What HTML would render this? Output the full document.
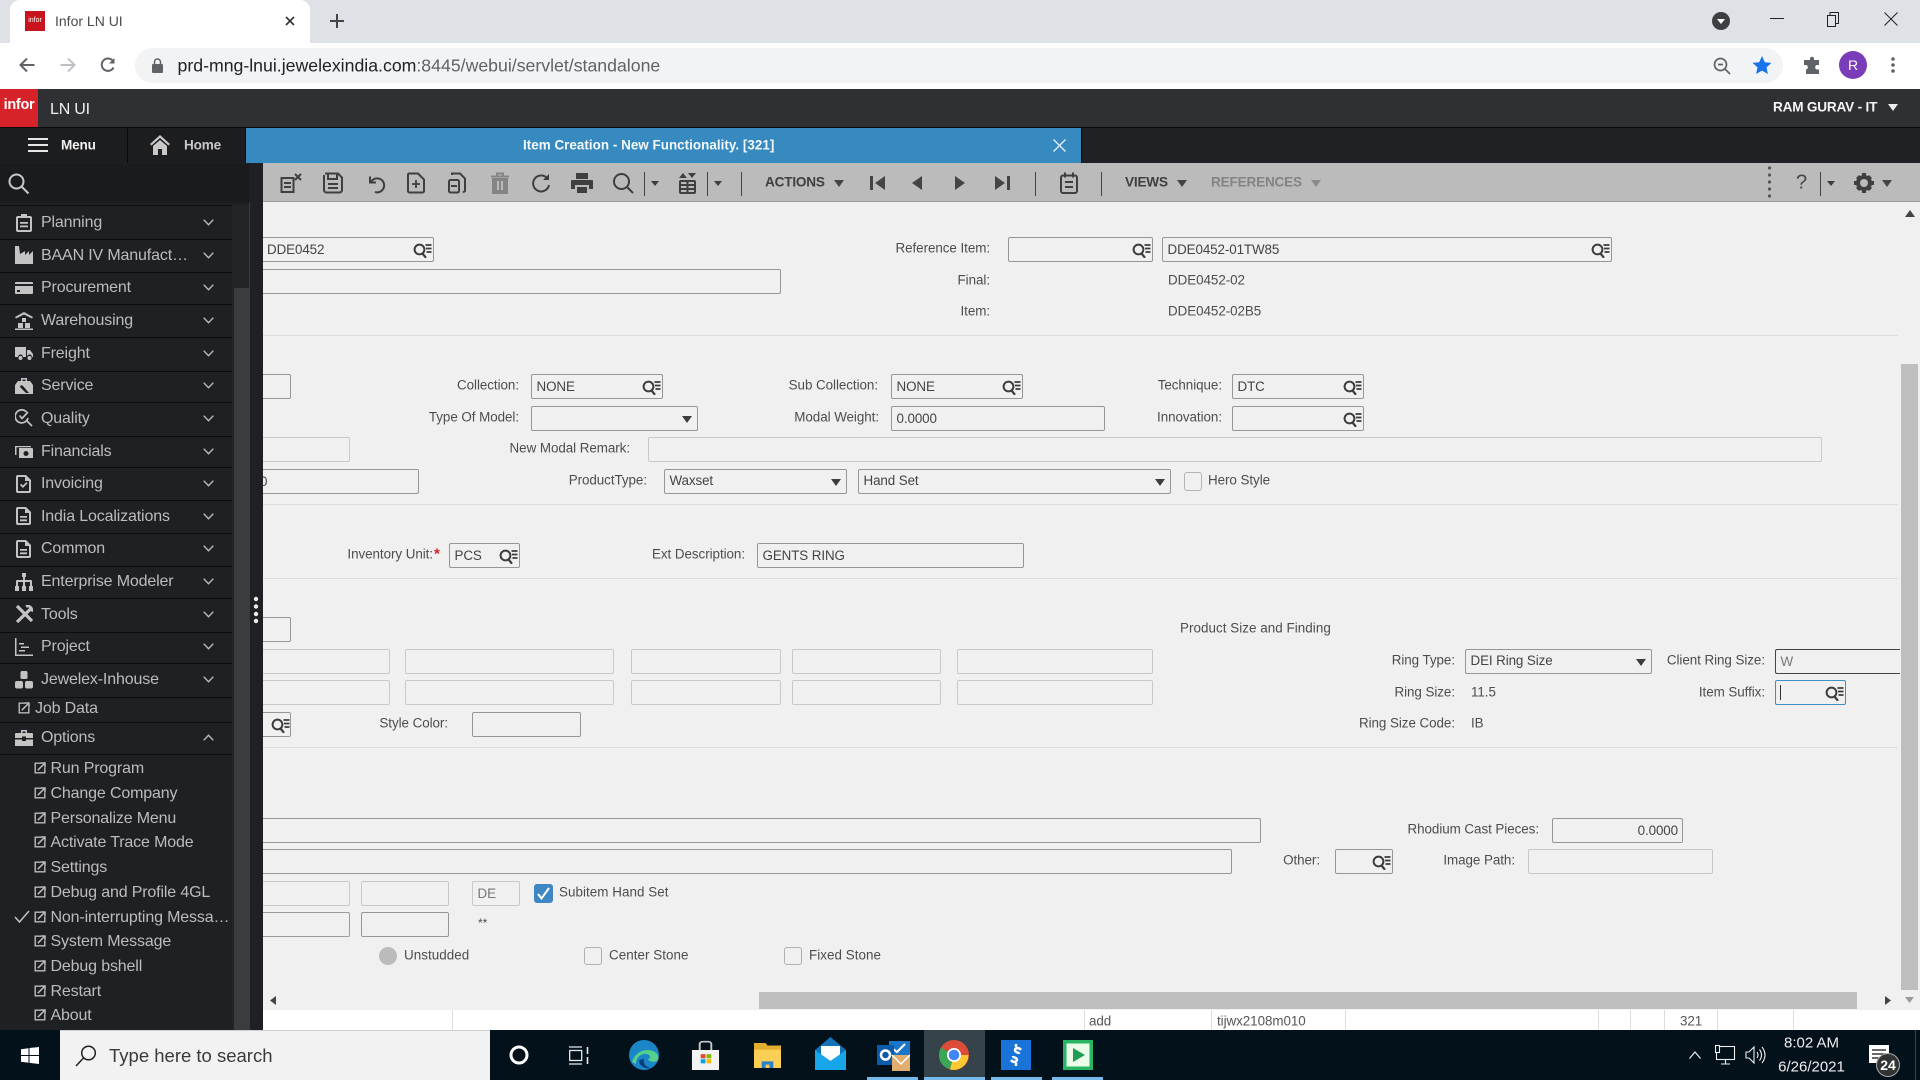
<!DOCTYPE html>
<html><head><meta charset="utf-8"><title>Infor LN UI</title>
<style>
html,body{margin:0;padding:0;width:1920px;height:1080px;overflow:hidden;background:#f0f0f0;font-family:"Liberation Sans",Arial,sans-serif}
div,svg{position:absolute}
.t,.l{position:absolute;white-space:nowrap;font-size:13.4px;color:#4d4d4d;transform:translateY(-50%);letter-spacing:-.05px}
.l{transform:translate(-100%,-50%)}
.i{box-sizing:border-box;border:1px solid #969696;border-radius:2px;background:#f0f0f0;font-size:13.4px;color:#444;padding-left:4.5px;overflow:hidden;white-space:nowrap;line-height:23px;letter-spacing:-.1px}
.d{border-color:#c9c9c9}
.p{border-left:none;border-radius:0 2px 2px 0;padding-left:4px}
.sl{line-height:21px}
.q{right:1px;top:5px;width:19px;height:15px}
.a{width:0;height:0;border-left:5px solid transparent;border-right:5px solid transparent;border-top:7px solid #3d3d3d}
.hr{left:263px;width:1635px;height:1px;background:#dcdcdc}
.m{font-size:16px;color:#bcbcbc;left:41px;letter-spacing:-.15px;margin-top:1px}
.s{font-size:16px;color:#bcbcbc;left:50.5px;letter-spacing:-.15px;margin-top:1px}
.sep{position:absolute;left:0;width:232px;height:1px;background:#0d0d0e}
.tb{top:172px;width:22px;height:22px;fill:none;stroke:#3f3f3f;stroke-width:2}
.vs{top:172px;width:1px;height:24px;background:#444}
.sb{top:1010px;width:1px;height:20px;background:#dcdcdc}
.bt{font-weight:bold;font-size:13.6px;letter-spacing:-.2px}
.ul{top:1077px;height:3px;background:#76b9ed}
.ic{left:15px;width:18px;height:18px;fill:#c4c4c4;stroke:none}
.ch{left:203px;width:11px;height:7px;fill:none;stroke:#bcbcbc;stroke-width:1.4}
.e{width:12px;height:12px;fill:none;stroke:#bcbcbc;stroke-width:1.4}
</style></head><body>
<svg width="0" height="0" style="left:0;top:0">
<defs>
<symbol id="lk" viewBox="0 0 19 15"><circle cx="6.5" cy="6.5" r="4.9" fill="none" stroke="#3c3c3c" stroke-width="2"/><path d="M9.5 10.5L13 14.8" stroke="#3c3c3c" stroke-width="2.2" fill="none"/><path d="M12.5 2h6M13 5.5h5.5M13.5 9h5" stroke="#3c3c3c" stroke-width="1.7" fill="none"/></symbol>
<symbol id="ex" viewBox="0 0 12 12"><path d="M7 1.2H1.2v9.6h9.6V5.5"/><path d="M3.8 8.2L10.6 1.4M6.8 1h4.2v4.2" stroke-width="1.5"/></symbol>
<symbol id="cv" viewBox="0 0 11 7"><path d="M.7.7l4.8 5 4.8-5"/></symbol>
<symbol id="cu" viewBox="0 0 11 7"><path d="M.7 6.3l4.8-5 4.8 5"/></symbol>
<symbol id="doc" viewBox="0 0 18 18"><path d="M3 0h8l5 5v11a2 2 0 0 1-2 2H3a2 2 0 0 1-2-2V2a2 2 0 0 1 2-2zm0 2v14h11V6h-4V2zM5 9h7v1.8H5zm0 3.4h7v1.8H5z" fill-rule="evenodd"/></symbol>
</defs></svg>

<!-- Chrome tab bar -->
<div style="left:0;top:0;width:1920px;height:43px;background:#dee1e6"></div>
<div style="left:10px;top:0;width:300px;height:43px;background:#fff;border-radius:10px 10px 0 0"></div>
<div style="left:25px;top:11px;width:20px;height:20px;background:#c8141c;color:#fff;font-size:7px;line-height:20px;text-align:center">infor</div>
<span class="t" style="left:55px;top:21px;font-size:14px;color:#4a4a4a;letter-spacing:0">Infor LN UI</span>
<svg style="left:285px;top:16px" width="10" height="10"><path d="M1 1l8 8M9 1l-8 8" stroke="#333" stroke-width="1.6"/></svg>
<svg style="left:330px;top:14px" width="14" height="14"><path d="M7 0v14M0 7h14" stroke="#444" stroke-width="2"/></svg>
<svg style="left:1712px;top:12px" width="18" height="18"><circle cx="9" cy="9" r="9" fill="#3c4043"/><path d="M5 7h8l-4 5z" fill="#fff"/></svg>
<div style="left:1770px;top:18px;width:14px;height:1px;background:#222"></div>
<svg style="left:1826px;top:12px" width="13" height="15" fill="none" stroke="#222"><rect x="1.5" y="3.5" width="8" height="11"/><path d="M4 3V.5h8.500v11H10"/></svg>
<svg style="left:1884px;top:12px" width="14" height="14"><path d="M.5.5l13 13M13.500.5l-13 13" stroke="#222" stroke-width="1"/></svg>

<!-- Chrome toolbar -->
<div style="left:0;top:43px;width:1920px;height:46px;background:#fff"></div>
<div style="left:135px;top:48px;width:1648px;height:35px;background:#f1f3f4;border-radius:18px"></div>
<svg style="left:19px;top:57px" width="16" height="16" fill="none" stroke="#5f6368" stroke-width="2"><path d="M15.500 8H2M8 1.500L1.500 8 8 14.500"/></svg>
<svg style="left:60px;top:57px" width="16" height="16" fill="none" stroke="#bdc1c6" stroke-width="2"><path d="M.5 8H14M8 1.500L14.500 8 8 14.500"/></svg>
<svg style="left:100px;top:57px" width="16" height="16" fill="none" stroke="#5f6368" stroke-width="2"><path d="M13.500 10.500A6.200 6.200 0 1 1 12.500 3.500"/><path d="M14.500 1v5.500H9" fill="#5f6368" stroke="none"/></svg>
<svg style="left:152px;top:58px" width="11" height="15"><rect x="0" y="6" width="11" height="9" rx="1" fill="#5f6368"/><path d="M2.500 6.500V4a3 3 0 0 1 6 0v2.500" fill="none" stroke="#5f6368" stroke-width="1.500"/></svg>
<span class="t" style="left:177.500px;top:66px;font-size:17.7px;color:#202124;letter-spacing:0">prd-mng-lnui.jewelexindia.com<span style="color:#5f6368">:8445/webui/servlet/standalone</span></span>
<svg style="left:1713px;top:57px" width="18" height="18" fill="none" stroke="#5f6368" stroke-width="1.700"><circle cx="7.500" cy="7.500" r="6"/><path d="M12 12l5 5M5 7.500h5"/></svg>
<svg style="left:1752px;top:55px" width="20" height="20"><path d="M10 1l2.800 6.200 6.700.7-5 4.500 1.400 6.600L10 15.600 4.100 19l1.400-6.600-5-4.500 6.700-.7z" fill="#1a73e8"/></svg>
<svg style="left:1803px;top:56px" width="19" height="19"><path d="M7 2a2.200 2.200 0 0 1 4 0v2h5v5h-2a2.300 2.300 0 0 0 0 4.500h2V18H3v-4.500a2.300 2.300 0 0 0 0-4.500H1V4h6z" fill="#5f6368"/></svg>
<div style="left:1839px;top:51px;width:28px;height:28px;border-radius:50%;background:#7a3db8;color:#fff;font-size:14px;line-height:28px;text-align:center">R</div>
<svg style="left:1891px;top:57px" width="4" height="16"><circle cx="2" cy="2" r="1.800" fill="#5f6368"/><circle cx="2" cy="8" r="1.800" fill="#5f6368"/><circle cx="2" cy="14" r="1.800" fill="#5f6368"/></svg>

<!-- App header -->
<div style="left:0;top:89px;width:1920px;height:38px;background:#2f3034"></div>
<div style="left:0;top:89px;width:38px;height:38px;background:#d8222a;color:#fff;font-weight:bold;font-size:14.500px;line-height:33px;text-align:center;letter-spacing:-.3px">infor</div>
<span class="t" style="left:50px;top:110px;font-size:16px;color:#f0f0f0;letter-spacing:-.2px">LN UI</span>
<span class="t bt" style="left:1773px;top:107px;color:#f5f5f5">RAM GURAV - IT</span>
<div class="a" style="left:1888px;top:104px;border-top-color:#eee"></div>
<div style="left:0;top:127px;width:1920px;height:1px;background:#0a0a0a"></div>

<!-- Tab row -->
<div style="left:0;top:128px;width:1920px;height:35px;background:#202124"></div>
<div style="left:0;top:128px;width:246px;height:35px;background:#1c1d1f"></div>
<div style="left:127px;top:128px;width:1px;height:35px;background:#0a0a0a"></div>
<div style="left:245px;top:128px;width:1px;height:35px;background:#0a0a0a"></div>
<svg style="left:28px;top:137px" width="20" height="16"><path d="M0 2h20M0 8h20M0 14h20" stroke="#e6e6e6" stroke-width="2"/></svg>
<span class="t bt" style="left:61px;top:145px;color:#f0f0f0">Menu</span>
<svg style="left:150px;top:135px" width="20" height="20"><path d="M10 0L20 9l-1.500 1.500L10 3 1.500 10.500 0 9z M10 5l7 6v9h-5v-6H8v6H3v-9z" fill="#c8c8c8"/></svg>
<span class="t bt" style="left:184px;top:145px;color:#c8c8c8">Home</span>
<div style="left:246px;top:128px;width:835px;height:35px;background:#368ac0"></div>
<span class="t bt" style="left:523px;top:145px;color:#f4f8fb;font-size:13.400px;letter-spacing:.04px">Item Creation - New Functionality. [321]</span>
<svg style="left:1053px;top:139px" width="13" height="13"><path d="M.5.5l12 12M12.500.5l-12 12" stroke="#e4f0f8" stroke-width="1.300"/></svg>
<div style="left:1081px;top:128px;width:1px;height:35px;background:#0a0a0a"></div>

<!-- Main form bg -->
<div style="left:263px;top:201px;width:1657px;height:829px;background:#f0f0f0"></div>

<!-- Toolbar -->
<div style="left:263px;top:163px;width:1657px;height:39px;background:#bbbbbb;border-bottom:1px solid #9c9c9c;box-sizing:border-box"></div>
<svg class="tb" style="left:280px" viewBox="0 0 22 22"><rect x="1.500" y="6" width="12" height="14"/><path d="M4 11h7M4 15h7"/><path d="M15 2l6 6M21 2l-6 6" stroke-width="2"/></svg>
<svg class="tb" style="left:322px" viewBox="0 0 22 22"><path d="M3 1.500h13l4 4V18a2.500 2.500 0 0 1-2.500 2.500h-13A2.500 2.500 0 0 1 2 18V3"/><path d="M6 2v5h9V2M6 12h10M6 16h10"/></svg>
<svg class="tb" style="left:364px" viewBox="0 0 22 22"><path d="M6 4.500v6h6"/><path d="M7 10a7 7 0 1 1 4 10"/></svg>
<svg class="tb" style="left:405px" viewBox="0 0 22 22"><path d="M4 1.500h9l6 6V19a1.500 1.500 0 0 1-1.500 1.500h-13A1.500 1.500 0 0 1 3 19V3a1.500 1.500 0 0 1 1-1.500z"/><path d="M11 8v8M7 12h8" stroke-width="1.800"/></svg>
<svg class="tb" style="left:446px" viewBox="0 0 22 22"><path d="M6 3V1.500h8l5 5V19l-2 1.500"/><rect x="3" y="8" width="10" height="12.500" rx="1.500"/><path d="M5 14h6"/></svg>
<svg class="tb" style="left:489px;stroke:#858585" viewBox="0 0 22 22"><path d="M2 4.500h18M8 4V1.500h6V4"/><path d="M4 7h14v14H4z" fill="#858585"/><path d="M9 9v9M13 9v9" stroke="#bbb"/></svg>
<svg class="tb" style="left:530px" viewBox="0 0 22 22"><path d="M17 6a8 8 0 1 0 2 7"/><path d="M19 2v6h-6" fill="#3f3f3f" stroke="none"/></svg>
<svg class="tb" style="left:571px;stroke:none;fill:#3f3f3f" viewBox="0 0 22 22"><path d="M5 1h12v6H5zM1 8h20a1 1 0 0 1 1 1v8h-4v-4H4v4H0V9a1 1 0 0 1 1-1zM6 15h10v6H6z"/></svg>
<svg class="tb" style="left:612px" viewBox="0 0 22 22"><circle cx="9.500" cy="9.500" r="7.500"/><path d="M15 15l6 6"/></svg>
<div class="vs" style="left:644px"></div>
<div class="a" style="left:651px;top:181px;border-left-width:4px;border-right-width:4px;border-top-width:5px"></div>
<svg class="tb" style="left:677px" viewBox="0 0 22 22"><rect x="3" y="9" width="15" height="12" rx="1"/><path d="M3 13h15M3 17h15M10.500 9v12"/><path d="M6 1l4 5H2zM15 6l4-5h-8z" fill="#3f3f3f" stroke="none"/></svg>
<div class="vs" style="left:707px"></div>
<div class="a" style="left:714px;top:181px;border-left-width:4px;border-right-width:4px;border-top-width:5px"></div>
<div class="vs" style="left:741px"></div>
<span class="t bt" style="left:765px;top:182px;color:#3f3f3f">ACTIONS</span>
<div class="a" style="left:834px;top:180px;border-top-color:#444"></div>
<svg style="left:870px;top:176px" width="15" height="14"><path d="M0 0h3v14H0zM15 0v14L5 7z" fill="#444"/></svg>
<svg style="left:912px;top:176px" width="10" height="14"><path d="M10 0v14L0 7z" fill="#444"/></svg>
<svg style="left:955px;top:176px" width="10" height="14"><path d="M0 0v14l10-7z" fill="#444"/></svg>
<svg style="left:995px;top:176px" width="15" height="14"><path d="M0 0v14l10-7zM12 0h3v14h-3z" fill="#444"/></svg>
<div class="vs" style="left:1035px"></div>
<svg class="tb" style="left:1058px" viewBox="0 0 22 22"><rect x="3" y="3.500" width="16" height="17.500" rx="2"/><path d="M7 .5v5M15 .5v5M7 10h8M7 15h8"/></svg>
<div class="vs" style="left:1101px"></div>
<span class="t bt" style="left:1125px;top:182px;color:#3f3f3f">VIEWS</span>
<div class="a" style="left:1177px;top:180px;border-top-color:#444"></div>
<span class="t bt" style="left:1211px;top:182px;color:#838383">REFERENCES</span>
<div class="a" style="left:1311px;top:180px;border-top-color:#8a8a8a"></div>
<svg style="left:1767px;top:165px" width="5" height="34"><circle cx="2.500" cy="3" r="1.600" fill="#555"/><circle cx="2.500" cy="10" r="1.600" fill="#555"/><circle cx="2.500" cy="17" r="1.600" fill="#555"/><circle cx="2.500" cy="24" r="1.600" fill="#555"/><circle cx="2.500" cy="31" r="1.600" fill="#555"/></svg>
<span class="t" style="left:1796px;top:183px;font-size:20px;color:#444;letter-spacing:0">?</span>
<div class="vs" style="left:1820px"></div>
<div class="a" style="left:1827px;top:181px;border-left-width:4px;border-right-width:4px;border-top-width:5px"></div>
<svg style="left:1853px;top:172px" width="22" height="22" viewBox="0 0 22 22"><circle cx="11" cy="11" r="6" fill="none" stroke="#3f3f3f" stroke-width="4"/><path d="M9 1h4v4H9zM9 17h4v4H9zM1 9h4v4H1zM17 9h4v4h-4zM3 6l3-3 3 3-3 3zM13 16l3-3 3 3-3 3zM16 3l3 3-3 3-3-3zM6 13l3 3-3 3-3-3z" fill="#3f3f3f"/></svg>
<div class="a" style="left:1882px;top:180px;border-top-color:#444"></div>

<!-- Sidebar -->
<div style="left:0;top:163px;width:263px;height:867px;background:#1f2023"></div>
<div style="left:0;top:164px;width:249px;height:39px;background:#1a1b1d"></div>
<svg style="left:8px;top:173px" width="22" height="22" fill="none" stroke="#c8c8c8" stroke-width="2"><circle cx="8.500" cy="8.500" r="7"/><path d="M13.500 13.500l7 7"/></svg>
<div style="left:232px;top:205px;width:17px;height:825px;background:#232427"></div>
<div style="left:234px;top:288px;width:15px;height:742px;background:#3b3c3f"></div>
<div style="left:249px;top:203px;width:1px;height:827px;background:#3a3b3e"></div>
<svg style="left:253px;top:596px" width="6" height="28"><circle cx="3" cy="3" r="2.200" fill="#eee"/><circle cx="3" cy="10.500" r="2.200" fill="#eee"/><circle cx="3" cy="18" r="2.200" fill="#eee"/><circle cx="3" cy="25" r="2.200" fill="#eee"/></svg>
<div class="sep" style="top:205px"></div><div class="sep" style="top:239px"></div><div class="sep" style="top:272px"></div><div class="sep" style="top:304px"></div><div class="sep" style="top:337px"></div><div class="sep" style="top:371px"></div><div class="sep" style="top:402px"></div><div class="sep" style="top:436px"></div><div class="sep" style="top:467px"></div><div class="sep" style="top:500px"></div><div class="sep" style="top:533px"></div><div class="sep" style="top:566px"></div><div class="sep" style="top:598px"></div><div class="sep" style="top:632px"></div><div class="sep" style="top:663px"></div><div class="sep" style="top:697px"></div><div class="sep" style="top:722px"></div><div class="sep" style="top:754px"></div>

<svg class="ic" style="top:214px" viewBox="0 0 18 18"><path d="M6 0h6v2h3a2 2 0 0 1 2 2v12a2 2 0 0 1-2 2H3a2 2 0 0 1-2-2V4a2 2 0 0 1 2-2h3zM3 4v12h12V4zM5 8h8v1.800H5zm0 3.500h8v1.800H5z" fill-rule="evenodd"/></svg>
<span class="t m" style="top:222px">Planning</span>
<svg class="ic" style="top:246px" viewBox="0 0 18 18"><path d="M0 0h4l1 8 5-3v4l4-4v4l4-4v13H0z"/></svg>
<span class="t m" style="top:255px">BAAN IV Manufact…</span>
<svg class="ic" style="top:279px" viewBox="0 0 18 18"><path d="M1 3h16a1 1 0 0 1 1 1v1H0V4a1 1 0 0 1 1-1zM0 7h18v7a1 1 0 0 1-1 1H1a1 1 0 0 1-1-1zm2 4v2h3v-2z" fill-rule="evenodd"/></svg>
<span class="t m" style="top:287px">Procurement</span>
<svg class="ic" style="top:312px" viewBox="0 0 18 18"><path d="M9 0l9 5-1 1.500L9 2.500 1 6.500 0 5zM7 6h4v4H7zM3 11h5v5H3zM10 11h5v5h-5zM0 16.500h18V18H0z"/></svg>
<span class="t m" style="top:320px">Warehousing</span>
<svg class="ic" style="top:344px" viewBox="0 0 18 18"><path d="M0 3h11v10H8a2.500 2.500 0 0 0-5 0H0zM12 6h3l3 4v3h-1a2.500 2.500 0 0 0-5 0z"/><circle cx="5.500" cy="14" r="2"/><circle cx="14.500" cy="14" r="2"/></svg>
<span class="t m" style="top:353px">Freight</span>
<svg class="ic" style="top:377px" viewBox="0 0 18 18"><path d="M6 1h6v3h3l3 4v9H0V8l3-4h3zm1.500 1.500V4h3V2.500zM6 8l-1 2 6 6h3l-6-7z" fill-rule="evenodd"/></svg>
<span class="t m" style="top:385px">Service</span>
<svg class="ic" style="top:409px;fill:none;stroke:#c4c4c4;stroke-width:1.700" viewBox="0 0 18 18"><path d="M11.500 3A6.500 6.500 0 1 0 13 9"/><path d="M4.500 6.500l2.500 3 6-6.500M11 11l6 6"/></svg>
<span class="t m" style="top:418px">Quality</span>
<svg class="ic" style="top:442px" viewBox="0 0 18 18"><path d="M4 6h13a1 1 0 0 1 1 1v9H4zm7 3a2.500 2.500 0 1 0 .01 0zM0 4h16v1.200H1.500V13H0z" fill-rule="evenodd"/></svg>
<span class="t m" style="top:451px">Financials</span>
<svg class="ic" style="top:475px" viewBox="0 0 18 18"><path d="M3 0h8l5 5v11a2 2 0 0 1-2 2H3a2 2 0 0 1-2-2V2a2 2 0 0 1 2-2zm0 2v14h11V6h-4V2zM5 10l1.200-1.200 1.700 1.700 3.500-3.500L12.600 8.200l-4.700 4.800z" fill-rule="evenodd"/></svg>
<span class="t m" style="top:483px">Invoicing</span>
<svg class="ic" style="top:507px"><use href="#doc"/></svg>
<span class="t m" style="top:516px">India Localizations</span>
<svg class="ic" style="top:540px"><use href="#doc"/></svg>
<span class="t m" style="top:548px">Common</span>
<svg class="ic" style="top:573px" viewBox="0 0 18 18"><path d="M7 0h4v4h-1v3h6a1 1 0 0 1 1 1v5h1v5h-4v-5h1V9h-5v4h1v5H7v-5h1V9H3v4h1v5H0v-5h1V8a1 1 0 0 1 1-1h6V4H7z"/></svg>
<span class="t m" style="top:581px">Enterprise Modeler</span>
<svg class="ic" style="top:605px;fill:none;stroke:#c4c4c4;stroke-width:3.200" viewBox="0 0 18 18"><path d="M2 1l15 15"/><path d="M15.500 4L2 17"/><path d="M11 1.500a4 4 0 0 1 5.500 5" stroke-width="2.600"/></svg>
<span class="t m" style="top:614px">Tools</span>
<svg class="ic" style="top:638px" viewBox="0 0 18 18"><path d="M0 0h1.500v16.500H18V18H0zM4 5h5v1.500H4zM6 8.500h8V10H6zM4 12h6v1.500H4z"/></svg>
<span class="t m" style="top:646px">Project</span>
<svg class="ic" style="top:671px" viewBox="0 0 18 18"><rect x="5.500" y="0" width="7" height="8" rx="1.500"/><rect x="0" y="10" width="8" height="7.500" rx="2"/><rect x="10" y="10" width="8" height="7.500" rx="2"/></svg>
<span class="t m" style="top:679px">Jewelex-Inhouse</span>
<svg class="e" style="left:18px;top:702px"><use href="#ex"/></svg>
<span class="t m" style="top:708px;left:35px">Job Data</span>
<svg class="ic" style="top:729px" viewBox="0 0 18 18"><path d="M6 1h6v3h5a1 1 0 0 1 1 1v4H11V7.500H7V9H0V5a1 1 0 0 1 1-1h5zm1.500 1.500V4h3V2.500zM0 10.500h7V12h4v-1.500h7V17H0z" fill-rule="evenodd"/></svg>
<span class="t m" style="top:737px">Options</span>
<svg class="ch" style="top:219px"><use href="#cv"/></svg><svg class="ch" style="top:252px"><use href="#cv"/></svg><svg class="ch" style="top:284px"><use href="#cv"/></svg><svg class="ch" style="top:317px"><use href="#cv"/></svg><svg class="ch" style="top:350px"><use href="#cv"/></svg><svg class="ch" style="top:382px"><use href="#cv"/></svg><svg class="ch" style="top:415px"><use href="#cv"/></svg><svg class="ch" style="top:448px"><use href="#cv"/></svg><svg class="ch" style="top:480px"><use href="#cv"/></svg><svg class="ch" style="top:513px"><use href="#cv"/></svg><svg class="ch" style="top:545px"><use href="#cv"/></svg><svg class="ch" style="top:578px"><use href="#cv"/></svg><svg class="ch" style="top:611px"><use href="#cv"/></svg><svg class="ch" style="top:643px"><use href="#cv"/></svg><svg class="ch" style="top:676px"><use href="#cv"/></svg><svg class="ch" style="top:734px"><use href="#cu"/></svg>

<svg class="e" style="left:34px;top:762px"><use href="#ex"/></svg><span class="t s" style="top:768px">Run Program</span>
<svg class="e" style="left:34px;top:787px"><use href="#ex"/></svg><span class="t s" style="top:793px">Change Company</span>
<svg class="e" style="left:34px;top:812px"><use href="#ex"/></svg><span class="t s" style="top:818px">Personalize Menu</span>
<svg class="e" style="left:34px;top:836px"><use href="#ex"/></svg><span class="t s" style="top:842px">Activate Trace Mode</span>
<svg class="e" style="left:34px;top:861px"><use href="#ex"/></svg><span class="t s" style="top:867px">Settings</span>
<svg class="e" style="left:34px;top:886px"><use href="#ex"/></svg><span class="t s" style="top:892px">Debug and Profile 4GL</span>
<svg style="left:14px;top:910px" width="16" height="13" fill="none" stroke="#c4c4c4" stroke-width="1.500"><path d="M1 7l4.500 5L15 1"/></svg>
<svg class="e" style="left:34px;top:911px"><use href="#ex"/></svg><span class="t s" style="top:917px">Non-interrupting Messa…</span>
<svg class="e" style="left:34px;top:935px"><use href="#ex"/></svg><span class="t s" style="top:941px">System Message</span>
<svg class="e" style="left:34px;top:960px"><use href="#ex"/></svg><span class="t s" style="top:966px">Debug bshell</span>
<svg class="e" style="left:34px;top:985px"><use href="#ex"/></svg><span class="t s" style="top:991px">Restart</span>
<svg class="e" style="left:34px;top:1009px"><use href="#ex"/></svg><span class="t s" style="top:1015px">About</span>

<!-- Form -->
<div class="i p" style="left:263px;top:237px;width:171px;height:25px">DDE0452<svg class="q"><use href="#lk"/></svg></div>
<span class="l" style="left:990px;top:248px">Reference Item:</span>
<div class="i" style="left:1008px;top:237px;width:145px;height:25px"><svg class="q"><use href="#lk"/></svg></div>
<div class="i" style="left:1162px;top:237px;width:450px;height:25px">DDE0452-01TW85<svg class="q"><use href="#lk"/></svg></div>
<div class="i p" style="left:263px;top:269px;width:518px;height:25px"></div>
<span class="l" style="left:990px;top:280px">Final:</span>
<span class="t" style="left:1168px;top:280px">DDE0452-02</span>
<span class="l" style="left:990px;top:311px">Item:</span>
<span class="t" style="left:1168px;top:311px">DDE0452-02B5</span>
<div class="hr" style="top:335px"></div>

<div class="i p" style="left:263px;top:374px;width:28px;height:25px"></div>
<span class="l" style="left:519px;top:385px">Collection:</span>
<div class="i" style="left:531px;top:374px;width:132px;height:25px">NONE<svg class="q"><use href="#lk"/></svg></div>
<span class="l" style="left:878px;top:385px">Sub Collection:</span>
<div class="i" style="left:891px;top:374px;width:132px;height:25px">NONE<svg class="q"><use href="#lk"/></svg></div>
<span class="l" style="left:1222px;top:385px">Technique:</span>
<div class="i" style="left:1232px;top:374px;width:132px;height:25px">DTC<svg class="q"><use href="#lk"/></svg></div>

<span class="l" style="left:519px;top:417px">Type Of Model:</span>
<div class="i" style="left:531px;top:406px;width:167px;height:25px"><div class="a" style="left:150px;top:9px"></div></div>
<span class="l" style="left:879px;top:417px">Modal Weight:</span>
<div class="i" style="left:891px;top:406px;width:214px;height:25px">0.0000</div>
<span class="l" style="left:1222px;top:417px">Innovation:</span>
<div class="i" style="left:1232px;top:406px;width:132px;height:25px"><svg class="q"><use href="#lk"/></svg></div>

<div class="i d p" style="left:263px;top:437px;width:87px;height:25px"></div>
<span class="l" style="left:630px;top:448px">New Modal Remark:</span>
<div class="i d" style="left:648px;top:437px;width:1174px;height:25px"></div>

<div class="i p" style="left:263px;top:469px;width:156px;height:25px;padding-left:0;text-indent:-3px">0</div>
<span class="l" style="left:647px;top:480px">ProductType:</span>
<div class="i sl" style="left:664px;top:469px;width:183px;height:25px">Waxset<div class="a" style="left:166px;top:9px"></div></div>
<div class="i sl" style="left:858px;top:469px;width:313px;height:25px">Hand Set<div class="a" style="left:296px;top:9px"></div></div>
<div style="left:1184px;top:472px;width:18px;height:19px;box-sizing:border-box;border:1.500px solid #b4b4b4;border-radius:3px"></div>
<span class="t" style="left:1208px;top:480px">Hero Style</span>
<div class="hr" style="top:504px"></div>

<span class="l" style="left:433px;top:554px">Inventory Unit:</span>
<span class="t" style="left:434px;top:554px;color:#d8222a;font-size:15px;font-weight:bold">*</span>
<div class="i" style="left:449px;top:543px;width:71px;height:25px">PCS<svg class="q"><use href="#lk"/></svg></div>
<span class="l" style="left:745px;top:554px">Ext Description:</span>
<div class="i" style="left:757px;top:543px;width:267px;height:25px">GENTS RING</div>
<div class="hr" style="top:578px"></div>

<div class="i p" style="left:263px;top:617px;width:28px;height:25px"></div>
<span class="t" style="left:1180px;top:628px;letter-spacing:.05px">Product Size and Finding</span>

<div class="i d p" style="left:263px;top:649px;width:127px;height:25px"></div>
<div class="i d" style="left:405px;top:649px;width:209px;height:25px"></div>
<div class="i d" style="left:631px;top:649px;width:150px;height:25px"></div>
<div class="i d" style="left:792px;top:649px;width:149px;height:25px"></div>
<div class="i d" style="left:957px;top:649px;width:196px;height:25px"></div>
<span class="l" style="left:1455px;top:660px">Ring Type:</span>
<div class="i sl" style="left:1465px;top:649px;width:187px;height:25px">DEI Ring Size<div class="a" style="left:170px;top:9px"></div></div>
<span class="l" style="left:1765px;top:660px">Client Ring Size:</span>
<div class="i" style="left:1775px;top:649px;width:125px;height:25px;border-color:#444;color:#777;border-right:none;border-radius:2px 0 0 2px">W</div>

<div class="i d p" style="left:263px;top:680px;width:127px;height:25px"></div>
<div class="i d" style="left:405px;top:680px;width:209px;height:25px"></div>
<div class="i d" style="left:631px;top:680px;width:150px;height:25px"></div>
<div class="i d" style="left:792px;top:680px;width:149px;height:25px"></div>
<div class="i d" style="left:957px;top:680px;width:196px;height:25px"></div>
<span class="l" style="left:1455px;top:692px">Ring Size:</span>
<span class="t" style="left:1471px;top:692px">11.5</span>
<span class="l" style="left:1765px;top:692px">Item Suffix:</span>
<div class="i" style="left:1775px;top:680px;width:71px;height:25px;border-color:#3f8fc4"><div style="left:4px;top:4px;width:1px;height:15px;background:#333"></div><svg class="q"><use href="#lk"/></svg></div>

<div class="i p" style="left:263px;top:712px;width:28px;height:25px"><svg class="q" style="right:0"><use href="#lk"/></svg></div>
<span class="l" style="left:448px;top:723px">Style Color:</span>
<div class="i" style="left:472px;top:712px;width:109px;height:25px"></div>
<span class="l" style="left:1455px;top:723px">Ring Size Code:</span>
<span class="t" style="left:1471px;top:723px">IB</span>
<div class="hr" style="top:747px"></div>

<div class="i p" style="left:263px;top:818px;width:998px;height:25px"></div>
<span class="l" style="left:1539px;top:829px">Rhodium Cast Pieces:</span>
<div class="i" style="left:1552px;top:818px;width:131px;height:25px;text-align:right;padding-right:4px">0.0000</div>
<div class="i p" style="left:263px;top:849px;width:969px;height:25px"></div>
<span class="l" style="left:1320px;top:860px">Other:</span>
<div class="i" style="left:1335px;top:849px;width:58px;height:25px"><svg class="q"><use href="#lk"/></svg></div>
<span class="l" style="left:1515px;top:860px">Image Path:</span>
<div class="i d" style="left:1528px;top:849px;width:185px;height:25px"></div>

<div class="i d p" style="left:263px;top:881px;width:87px;height:25px"></div>
<div class="i d" style="left:361px;top:881px;width:88px;height:25px"></div>
<div class="i d" style="left:472px;top:881px;width:48px;height:25px;color:#777">DE</div>
<svg style="left:534px;top:884px" width="19" height="19"><rect width="19" height="19" rx="3" fill="#3e87c2"/><path d="M4 10l3.500 4.500L15 4" fill="none" stroke="#fff" stroke-width="2"/></svg>
<span class="t" style="left:559px;top:892px;letter-spacing:.05px">Subitem Hand Set</span>
<div class="i d p" style="left:263px;top:912px;width:87px;height:25px;border-color:#9c9c9c"></div>
<div class="i" style="left:361px;top:912px;width:88px;height:25px"></div>
<span class="t" style="left:478px;top:923px;font-size:12px">**</span>
<div style="left:379px;top:947px;width:18px;height:18px;border-radius:50%;background:#bbb"></div>
<span class="t" style="left:404px;top:955px;letter-spacing:.05px">Unstudded</span>
<div style="left:584px;top:947px;width:18px;height:18px;box-sizing:border-box;border:1.500px solid #b0b0b0;border-radius:3px"></div>
<span class="t" style="left:609px;top:955px;letter-spacing:.05px">Center Stone</span>
<div style="left:784px;top:947px;width:18px;height:18px;box-sizing:border-box;border:1.500px solid #b0b0b0;border-radius:3px"></div>
<span class="t" style="left:809px;top:955px;letter-spacing:.05px">Fixed Stone</span>

<!-- scrollbars -->
<svg style="left:1905px;top:210px" width="10" height="7"><path d="M5 0l5 7H0z" fill="#444"/></svg>
<div style="left:1901px;top:364px;width:17px;height:626px;background:#bebebe"></div>
<div style="left:759px;top:992px;width:1098px;height:17px;background:#bebebe"></div>
<svg style="left:270px;top:996px" width="6" height="9"><path d="M6 0v9L0 4.500z" fill="#444"/></svg>
<svg style="left:1885px;top:996px" width="6" height="9"><path d="M0 0v9l6-4.500z" fill="#444"/></svg>
<svg style="left:1905px;top:997px" width="9" height="6"><path d="M0 0h9L4.500 6z" fill="#9a9a9a"/></svg>

<!-- status bar -->
<div style="left:263px;top:1010px;width:1657px;height:20px;background:#fff"></div>
<div class="sb" style="left:452px"></div><div class="sb" style="left:1084px"></div><div class="sb" style="left:1211px"></div><div class="sb" style="left:1345px"></div><div class="sb" style="left:1598px"></div><div class="sb" style="left:1630px"></div><div class="sb" style="left:1664px"></div><div class="sb" style="left:1717px"></div><div class="sb" style="left:1793px"></div>
<span class="t" style="left:1089px;top:1021px;color:#555">add</span>
<span class="t" style="left:1217px;top:1021px;color:#555">tijwx2108m010</span>
<span class="t" style="left:1680px;top:1021px;color:#555">321</span>

<!-- Taskbar -->
<div style="left:0;top:1030px;width:1920px;height:50px;background:#03111b"></div>
<svg style="left:21px;top:1047px" width="18" height="17"><path d="M0 2.300L7.500 1.200V8H0zM8.500 1L18 0v8H8.500zM0 9h7.500v6.800L0 14.700zM8.500 9H18v8l-9.500-1.100z" fill="#fff"/></svg>
<div style="left:60px;top:1030px;width:430px;height:50px;background:#f2f2f2;box-sizing:border-box;border-top:1px solid #cfcfcf"></div>
<svg style="left:75px;top:1045px" width="22" height="22" fill="none" stroke="#222" stroke-width="1.500"><circle cx="13.500" cy="8" r="6.800"/><path d="M8.500 13L1 21"/></svg>
<span class="t" style="left:109px;top:1056px;font-size:18.5px;color:#3a3a3a;letter-spacing:0">Type here to search</span>
<svg style="left:509px;top:1045px" width="20" height="20"><circle cx="10" cy="10" r="8" fill="none" stroke="#fff" stroke-width="3"/></svg>
<svg style="left:569px;top:1046px" width="20" height="19" fill="none" stroke="#e8e8e8" stroke-width="1.300"><path d="M0 1h13M0 18h13"/><rect x="0.700" y="4.500" width="12" height="10"/><path d="M18.500 1v7M18.500 11v7" stroke-width="1.600"/></svg>
<svg style="left:629px;top:1040px" width="30" height="30"><circle cx="15" cy="15" r="15" fill="#1a86c8"/><path d="M3 22C6 12 16 8 24 11c5 2 6 6 5 9-3 3-9 2-10-1 2 0 3-2 1-4-4-3-13 0-13 9z" fill="#54d08d"/><path d="M10 20c0 6 5 9 12 8-5-1-8-4-7-9z" fill="#0b3f7c"/></svg>
<svg style="left:691px;top:1040px" width="29" height="30" viewBox="0 0 30 36" preserveAspectRatio="none"><path d="M1 12h28v24H1z" fill="#f3f3f3"/><path d="M9 12V5a3 3 0 0 1 3-3h6a3 3 0 0 1 3 3v7" fill="none" stroke="#c9c9c9" stroke-width="2"/><rect x="10" y="17" width="5" height="5" fill="#e2492d"/><rect x="16" y="17" width="5" height="5" fill="#7fba00"/><rect x="10" y="23" width="5" height="5" fill="#00a1f1"/><rect x="16" y="23" width="5" height="5" fill="#ffb900"/></svg>
<svg style="left:754px;top:1043px" width="27" height="25" viewBox="0 0 28 30" preserveAspectRatio="none"><path d="M0 0h12l2 3h14v26H0z" fill="#e3ae2e"/><path d="M0 8h28v22H0z" fill="#f9cf56"/><path d="M8 30v-8h12v8h-4v-4h-4v4z" fill="#2f7fc6"/></svg>
<svg style="left:815px;top:1037px" width="31" height="33"><path d="M15.500 0L31 13v20H0V13z" fill="#1273b8"/><path d="M6 9h19v9l-9.500 6-9.500-6z" fill="#fff"/><path d="M0 13l15.500 11L31 13v20H0z" fill="#16a6e9"/></svg>
<svg style="left:877px;top:1040px" width="33" height="31"><rect x="12" y="1" width="21" height="17" fill="#1976c8"/><path d="M15 8l5 4 8-8" fill="none" stroke="#fff" stroke-width="2"/><rect x="0" y="5" width="17" height="20" fill="#0b5ba8"/><circle cx="8.500" cy="15" r="4.500" fill="none" stroke="#fff" stroke-width="2.500"/><rect x="15" y="15" width="18" height="16" fill="#e1ae70"/><path d="M15 15l9 9 9-9" fill="none" stroke="#fff" stroke-width="1.500"/></svg>
<div style="left:924px;top:1030px;width:61px;height:50px;background:#37434a"></div>
<svg style="left:939px;top:1040px" width="30" height="30"><circle cx="15" cy="15" r="15" fill="#dd4b39"/><path d="M15 15L2 7.500A15 15 0 0 0 11 29.500z" fill="#3aa757"/><path d="M15 15h14.500A15 15 0 0 1 11 29.500z" fill="#fcc934"/><circle cx="15" cy="15" r="7" fill="#fff"/><circle cx="15" cy="15" r="5.300" fill="#4285f4"/></svg>
<svg style="left:1001px;top:1040px" width="30" height="30"><rect width="30" height="30" fill="#1a73d8"/><path d="M15 4v3M20 10c-2-3-6-2-6 0 0 3 4 2 4 4M10 20c2 3 6 2 6 0 0-3-4-2-4-4M15 23v3" fill="none" stroke="#fff" stroke-width="2.500"/></svg>
<svg style="left:1063px;top:1040px" width="30" height="30"><rect width="30" height="30" fill="#28b463"/><rect x="3.500" y="3.500" width="23" height="23" fill="#eafbe9"/><path d="M10 8l12 7-12 7z" fill="#1f9d55"/></svg>
<div class="ul" style="left:867px;width:51px"></div>
<div class="ul" style="left:924px;width:61px"></div>
<div class="ul" style="left:991px;width:51px"></div>
<div class="ul" style="left:1052px;width:51px"></div>
<svg style="left:1689px;top:1051px" width="12" height="8" fill="none" stroke="#eee" stroke-width="1.200"><path d="M.5 7.500L6 1l5.500 6.500"/></svg>
<svg style="left:1715px;top:1045px" width="21" height="20" fill="none" stroke="#eee" stroke-width="1.100"><rect x="1.500" y="1.500" width="18" height="13"/><rect x="0.500" y="0.500" width="4" height="7" fill="#03111b"/><path d="M10.500 15v4M6 19h9"/></svg>
<svg style="left:1745px;top:1045px" width="21" height="20" fill="none" stroke="#eee" stroke-width="1.100"><path d="M1 7h3l5-5v16l-5-5H1zM12 7q2 3 0 6M14.500 4.500q4 5.500 0 11M17 2q6 8 0 16"/></svg>
<span class="t" style="left:1811.500px;top:1043px;font-size:15px;color:#eee;transform:translate(-50%,-50%);letter-spacing:0">8:02 AM</span>
<span class="t" style="left:1811.500px;top:1067px;font-size:15px;color:#eee;transform:translate(-50%,-50%);letter-spacing:0">6/26/2021</span>
<svg style="left:1869px;top:1045px" width="20" height="18"><rect width="20" height="18" fill="#fff"/><path d="M3 5h14M3 9h14M3 13h9" stroke="#111" stroke-width="1.300"/></svg>
<div style="left:1876px;top:1053px;width:24px;height:24px;box-sizing:border-box;border-radius:50%;background:#333;border:1px solid #aaa;color:#fff;font-weight:bold;font-size:14px;line-height:22px;text-align:center">24</div>
<div style="left:1915px;top:1030px;width:1px;height:50px;background:#3a444b"></div>
</body></html>
